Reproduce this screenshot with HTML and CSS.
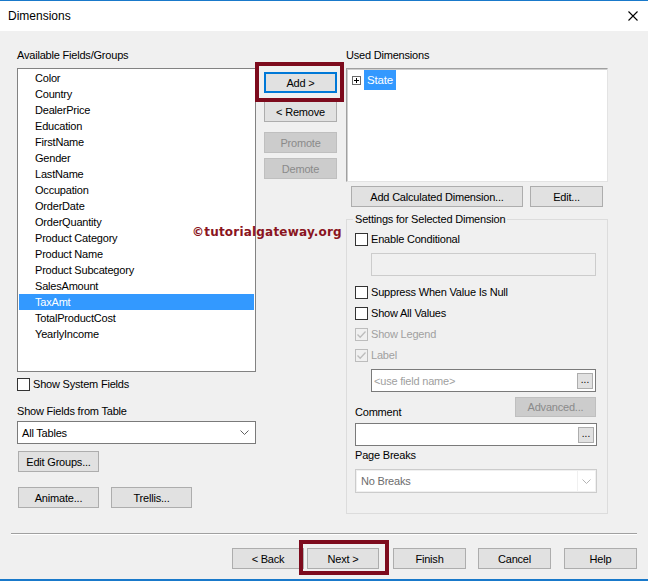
FILE: index.html
```html
<!DOCTYPE html>
<html lang="en">
<head>
    <meta charset="UTF-8">
    <title>Dimensions</title>
    <link rel="stylesheet" href="styles.css">
</head>
<body>
    <div class="dialog">
        <div class="titlebar">
            <span class="title">Dimensions</span>
            <svg class="close" viewBox="0 0 10 10"><path d="M0.5 0.5 L9.5 9.5 M9.5 0.5 L0.5 9.5" stroke="#000" stroke-width="1.1" fill="none"/></svg>
        </div>

        <div class="columns">
            <!-- Lista de campos -->
            <div class="col-left">
                <div class="label">Available Fields/Groups</div>
                <div class="listbox">
                    <div class="item">Color</div>
                    <div class="item">Country</div>
                    <div class="item">DealerPrice</div>
                    <div class="item">Education</div>
                    <div class="item">FirstName</div>
                    <div class="item">Gender</div>
                    <div class="item">LastName</div>
                    <div class="item">Occupation</div>
                    <div class="item">OrderDate</div>
                    <div class="item">OrderQuantity</div>
                    <div class="item">Product Category</div>
                    <div class="item">Product Name</div>
                    <div class="item">Product Subcategory</div>
                    <div class="item">SalesAmount</div>
                    <div class="item selected">TaxAmt</div>
                    <div class="item">TotalProductCost</div>
                    <div class="item">YearlyIncome</div>
                </div>
                <div class="check system-fields"><span class="box"></span>Show System Fields</div>
                <div class="label table-label">Show Fields from Table</div>
                <div class="combo">
                    <span>All Tables</span>
                    <svg class="chevron" viewBox="0 0 9 5"><path d="M0.5 0.5 L4.5 4.5 L8.5 0.5" stroke="#606060" fill="none"/></svg>
                </div>
                <button class="btn btn-groups">Edit Groups...</button>
                <div class="btn-row">
                    <button class="btn">Animate...</button>
                    <button class="btn btn-trellis">Trellis...</button>
                </div>
            </div>

            <!-- Botones centrales -->
            <div class="col-mid">
                <button class="btn btn-add">Add &gt;</button>
                <button class="btn btn-remove">&lt; Remove</button>
                <button class="btn disabled btn-promote">Promote</button>
                <button class="btn disabled btn-demote">Demote</button>
            </div>

            <!-- Dimensiones usadas -->
            <div class="col-right">
                <div class="label">Used Dimensions</div>
                <div class="used-box">
                    <div class="tree-row">
                        <svg class="expander" viewBox="0 0 9 9"><rect x="0.5" y="0.5" width="8" height="8" fill="#fff" stroke="#6a6a6a"/><path d="M2 4.5 H7 M4.5 2 V7" stroke="#000"/></svg>
                        <span class="tree-label">State</span>
                    </div>
                </div>
                <div class="btn-row used-actions">
                    <button class="btn btn-calc">Add Calculated Dimension...</button>
                    <button class="btn btn-edit">Edit...</button>
                </div>

                <fieldset class="settings">
                    <legend>Settings for Selected Dimension</legend>
                    <div class="check first"><span class="box"></span>Enable Conditional</div>
                    <div class="textbox disabled-box"></div>
                    <div class="check suppress"><span class="box"></span>Suppress When Value Is Null</div>
                    <div class="check spaced"><span class="box"></span>Show All Values</div>
                    <div class="check spaced grey">
                        <span class="box checked"><svg viewBox="0 0 11 11"><path d="M1.5 5.5 L4.2 8.3 L9.5 2.5" stroke="#bcbcbc" stroke-width="1.3" fill="none"/></svg></span>Show Legend
                    </div>
                    <div class="check spaced grey">
                        <span class="box checked"><svg viewBox="0 0 11 11"><path d="M1.5 5.5 L4.2 8.3 L9.5 2.5" stroke="#bcbcbc" stroke-width="1.3" fill="none"/></svg></span>Label
                    </div>
                    <div class="textbox field-name">
                        <span class="placeholder">&lt;use field name&gt;</span>
                        <button class="dots">...</button>
                    </div>
                    <div class="comment-row">
                        <span class="label">Comment</span>
                        <button class="btn disabled btn-advanced">Advanced...</button>
                    </div>
                    <div class="textbox comment">
                        <span></span>
                        <button class="dots">...</button>
                    </div>
                    <div class="label breaks-label">Page Breaks</div>
                    <div class="combo combo-disabled">
                        <span class="combo-text">No Breaks</span>
                        <span class="combo-arrow"><svg class="chevron" viewBox="0 0 9 5"><path d="M0.5 0.5 L4.5 4.5 L8.5 0.5" stroke="#b4b4b4" fill="none"/></svg></span>
                    </div>
                </fieldset>
            </div>
        </div>

        <div class="separator"></div>

        <div class="footer">
            <button class="btn btn-back">&lt; Back</button>
            <button class="btn btn-next">Next &gt;</button>
            <button class="btn btn-finish">Finish</button>
            <button class="btn btn-cancel">Cancel</button>
            <button class="btn btn-help">Help</button>
        </div>

        <!-- Marcas encima -->
        <div class="watermark">©tutorialgateway.org</div>
        <div class="callout callout-add"></div>
        <div class="callout callout-next"></div>
    </div>
</body>
</html>
```

FILE: styles.css
```css
* {
    box-sizing: border-box;
}

body {
    margin: 0;
    font-family: "Liberation Sans", Arial, sans-serif;
    font-size: 11px;
    letter-spacing: -0.2px;
    color: #000;
    background: #f0f0f0;
}

.dialog {
    position: relative;
    width: 648px;
    height: 581px;
    background: #f0f0f0;
    border-top: 1px solid #1979ca;
    border-bottom: 2px solid #1979ca;
    overflow: hidden;
}

.titlebar {
    height: 30px;
    background: #fff;
    display: flex;
    align-items: center;
    justify-content: space-between;
    padding: 0 10px 0 8px;
}

.title {
    font-size: 12px;
    letter-spacing: 0;
}

.close {
    width: 10px;
    height: 10px;
}

.columns {
    display: flex;
    align-items: flex-start;
    padding-left: 17px;
}

.label {
    height: 13px;
    line-height: 13px;
    white-space: nowrap;
}

.btn {
    height: 21px;
    padding: 0;
    border: 1px solid #adadad;
    background: #e1e1e1;
    font: inherit;
    letter-spacing: inherit;
    color: #000;
    white-space: nowrap;
}

.btn.disabled {
    background: #cccccc;
    border-color: #bfbfbf;
    color: #8a8a8a;
}

.btn-row {
    display: flex;
}

/* Columna izquierda */
.col-left {
    width: 239px;
    padding-top: 18px;
}

.listbox {
    margin-top: 6px;
    height: 304px;
    background: #fff;
    border: 1px solid #828282;
    padding: 1px;
}

.item {
    height: 16px;
    line-height: 16px;
    padding-left: 16px;
    white-space: nowrap;
}

.item.selected {
    background: #3399ff;
    color: #fff;
}

.check {
    display: flex;
    align-items: center;
    height: 13px;
    line-height: 13px;
    white-space: nowrap;
}

.check .box {
    width: 13px;
    height: 13px;
    border: 1px solid #333;
    background: #fff;
    margin-right: 3px;
    flex-shrink: 0;
}

.check.grey {
    color: #a0a0a0;
}

.check .box.checked {
    border-color: #bcbcbc;
    background: #f0f0f0;
}

.check .box svg {
    display: block;
    width: 11px;
    height: 11px;
}

.system-fields {
    margin-top: 6px;
}

.table-label {
    margin-top: 14px;
}

.combo {
    margin-top: 3px;
    height: 23px;
    background: #fff;
    border: 1px solid #7a7a7a;
    display: flex;
    align-items: center;
    justify-content: space-between;
    padding: 0 6px 0 4px;
}

.chevron {
    width: 9px;
    height: 5px;
}

.btn-groups {
    display: block;
    margin-top: 7px;
    margin-left: 1px;
    width: 81px;
}

.col-left .btn-row {
    margin-top: 15px;
    margin-left: 1px;
}

.col-left .btn-row .btn {
    width: 81px;
}

.col-left .btn-row .btn-trellis {
    margin-left: 12px;
}

/* Botones centrales */
.col-mid {
    width: 73px;
    margin-left: 8px;
    display: flex;
    flex-direction: column;
}

.col-mid .btn {
    width: 73px;
}

.btn-add {
    margin-top: 41px;
    border: 2px solid #0078d7;
}

.btn-remove {
    margin-top: 8px;
}

.btn-promote {
    margin-top: 10px;
}

.btn-demote {
    margin-top: 5px;
}

/* Columna derecha */
.col-right {
    width: 262px;
    margin-left: 9px;
    padding-top: 18px;
}

.used-box {
    margin-top: 6px;
    height: 114px;
    background: #fff;
    border: 1px solid;
    border-color: #a0a0a0 #e3e3e3 #e3e3e3 #a0a0a0;
    box-shadow: inset 1px 1px 0 #cfcfcf;
    padding: 1px 4px;
}

.tree-row {
    display: flex;
    align-items: center;
    height: 20px;
}

.expander {
    width: 9px;
    height: 9px;
    margin-left: 1px;
    margin-top: 1px;
}

.tree-label {
    margin-left: 3px;
    height: 20px;
    line-height: 20px;
    padding: 0 3px;
    background: #3399ff;
    color: #fff;
    font-size: 11.5px;
}

.used-actions {
    margin-top: 4px;
    padding-left: 5px;
}

.btn-calc {
    width: 172px;
}

.btn-edit {
    width: 73px;
    margin-left: 7px;
}

.settings {
    margin: 6px 0 0 0;
    padding: 0 8px 20px 8px;
    width: 262px;
    border: 1px solid #dcdcdc;
    min-width: 0;
}

.settings legend {
    padding: 0 2px;
    margin-left: -2px;
    height: 13px;
    line-height: 13px;
}

.settings .first {
    margin-top: 7px;
}

.textbox {
    height: 23px;
    border: 1px solid #7a7a7a;
    background: #fff;
    display: flex;
    align-items: center;
    justify-content: space-between;
    padding: 0 2px 0 2px;
}

.disabled-box {
    margin-top: 7px;
    margin-left: 16px;
    width: 225px;
    border-color: #cccccc;
    background: #f0f0f0;
}

.suppress {
    margin-top: 10px;
}

.spaced {
    margin-top: 8px;
}

.field-name {
    margin-top: 7px;
    margin-left: 16px;
    width: 225px;
}

.placeholder {
    color: #a0a0a0;
}

.dots {
    width: 16px;
    height: 16px;
    padding: 0 0 3px 0;
    border: 1px solid #adadad;
    background: #e1e1e1;
    font: inherit;
    font-size: 10px;
    letter-spacing: 0;
    line-height: 10px;
    color: #000;
    display: flex;
    align-items: flex-end;
    justify-content: center;
}

.comment-row {
    margin-top: 5px;
    display: flex;
    align-items: flex-end;
    justify-content: space-between;
    width: 241px;
}

.comment-row .label {
    margin-bottom: -2px;
}

.btn-advanced {
    width: 81px;
    height: 20px;
}

.comment {
    margin-top: 6px;
    width: 242px;
}

.breaks-label {
    margin-top: 3px;
}

.combo-disabled {
    margin-top: 7px;
    width: 242px;
    height: 24px;
    border-color: #cccccc;
    padding: 1px;
    background: #f0f0f0;
}

.combo-text {
    flex: 1;
    height: 100%;
    line-height: 20px;
    background: #fff;
    color: #6d6d6d;
    padding-left: 4px;
}

.combo-arrow {
    width: 18px;
    height: 100%;
    background: #fff;
    border-left: 1px solid #f0f0f0;
    display: flex;
    align-items: center;
    justify-content: center;
}

/* Pie */
.separator {
    margin: 19px 11px 0 11px;
    height: 2px;
    border-top: 1px solid #a0a0a0;
    border-bottom: 1px solid #fff;
}

.footer {
    margin-top: 13px;
    display: flex;
    justify-content: flex-end;
    padding-right: 11px;
}

.footer .btn {
    width: 73px;
}

.footer .btn-back,
.footer .btn-next {
    width: 72px;
}

.btn-next {
    margin-left: 3px;
}

.btn-finish {
    margin-left: 14px;
}

.btn-cancel {
    margin-left: 12px;
}

.btn-help {
    margin-left: 13px;
}

/* Anotaciones encima */
.watermark {
    position: absolute;
    left: 192px;
    top: 224px;
    font-family: "DejaVu Sans", Verdana, sans-serif;
    font-weight: bold;
    font-size: 12px;
    letter-spacing: 0.2px;
    line-height: 14px;
    color: #8a1421;
}

.callout {
    position: absolute;
    border: 4px solid #7d0b1d;
}

.callout-add {
    left: 255px;
    top: 61px;
    width: 89px;
    height: 40px;
}

.callout-next {
    left: 299px;
    top: 539px;
    width: 90px;
    height: 35px;
}
```
